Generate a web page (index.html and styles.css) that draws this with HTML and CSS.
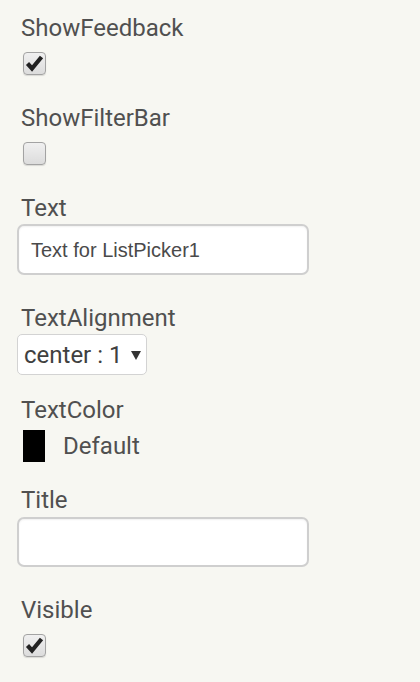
FILE: index.html
```html
<!DOCTYPE html>
<html>
<head>
<meta charset="utf-8">
<link rel="stylesheet" href="styles.css">
</head>
<body>
<div class="props">
  <div class="prop prop-check">
    <div class="label">ShowFeedback</div>
    <span class="checkbox"><svg viewBox="0 0 23 23" width="23" height="23"><polyline points="4.5,11.5 9,16.5 18.5,5" fill="none" stroke="#222" stroke-width="4.2" stroke-linejoin="miter" stroke-linecap="butt"/></svg></span>
  </div>
  <div class="prop prop-check">
    <div class="label">ShowFilterBar</div>
    <span class="checkbox"></span>
  </div>
  <div class="prop prop-input">
    <div class="label">Text</div>
    <div class="textbox">Text for ListPicker1</div>
  </div>
  <div class="prop prop-select">
    <div class="label">TextAlignment</div>
    <div class="select"><span>center : 1</span><svg class="caret" viewBox="0 0 10 10" width="10" height="10"><polygon points="0,1 10,1 5,10" fill="#333"/></svg></div>
  </div>
  <div class="prop prop-color">
    <div class="label">TextColor</div>
    <div class="color"><span class="swatch"></span><span class="color-name">Default</span></div>
  </div>
  <div class="prop prop-input prop-title">
    <div class="label">Title</div>
    <div class="textbox"></div>
  </div>
  <div class="prop prop-check">
    <div class="label">Visible</div>
    <span class="checkbox"><svg viewBox="0 0 23 23" width="23" height="23"><polyline points="4.5,11.5 9,16.5 18.5,5" fill="none" stroke="#222" stroke-width="4.2" stroke-linejoin="miter" stroke-linecap="butt"/></svg></span>
  </div>
</div>
</body>
</html>
```
FILE: styles.css
```css
html, body {
  margin: 0;
  padding: 0;
  background: #f7f7f2;
}
body {
  font-family: Roboto, "Liberation Sans", sans-serif;
  color: #505050;
  width: 420px;
  height: 682px;
  overflow: hidden;
}
.props {
  padding-top: 15px;
  display: flex;
  flex-direction: column;
}
.prop {
  display: flex;
  flex-direction: column;
  align-items: flex-start;
}
.label {
  font-size: 24px;
  line-height: 26px;
  height: 26px;
  padding-left: 21px;
  white-space: nowrap;
}
.checkbox {
  margin: 11px 0 30px 23px;
  width: 23px;
  height: 23px;
  box-sizing: border-box;
  border: 1px solid #a3a3a3;
  border-radius: 4px;
  background: linear-gradient(#f0f0f0, #dcdcdc);
  box-shadow: 0 1px 1px rgba(0,0,0,0.12);
  display: flex;
  align-items: center;
  justify-content: center;
}
.checkbox svg {
  display: block;
  margin: -1px;
}
.textbox {
  margin: 3px 0 30px 17px;
  width: 292px;
  height: 51px;
  box-sizing: border-box;
  border: 2px solid #cfcfcf;
  border-radius: 7px;
  background: #fff;
  box-shadow: inset 0 1px 2px rgba(0,0,0,0.06);
  padding-left: 12px;
  font-family: "Liberation Sans", Arial, sans-serif;
  font-size: 20px;
  line-height: 48px;
  color: #4a4a4a;
  white-space: nowrap;
}
.prop-title .textbox {
  margin-top: 4px;
  height: 50px;
}
.select {
  margin: 3px 0 22px 17px;
  width: 130px;
  height: 41px;
  box-sizing: border-box;
  border: 1px solid #d3d3d3;
  border-radius: 5px;
  background: #fff;
  display: flex;
  align-items: center;
  padding-left: 6px;
  font-size: 24px;
  color: #404040;
  gap: 9px;
  white-space: nowrap;
}
.caret {
  display: block;
  margin-top: 1px;
}
.color {
  margin: 7px 0 25px 23px;
  display: flex;
  align-items: center;
  gap: 18px;
}
.swatch {
  display: block;
  width: 22px;
  height: 32px;
  background: #000;
}
.color-name {
  font-size: 24px;
  line-height: 26px;
}
```
